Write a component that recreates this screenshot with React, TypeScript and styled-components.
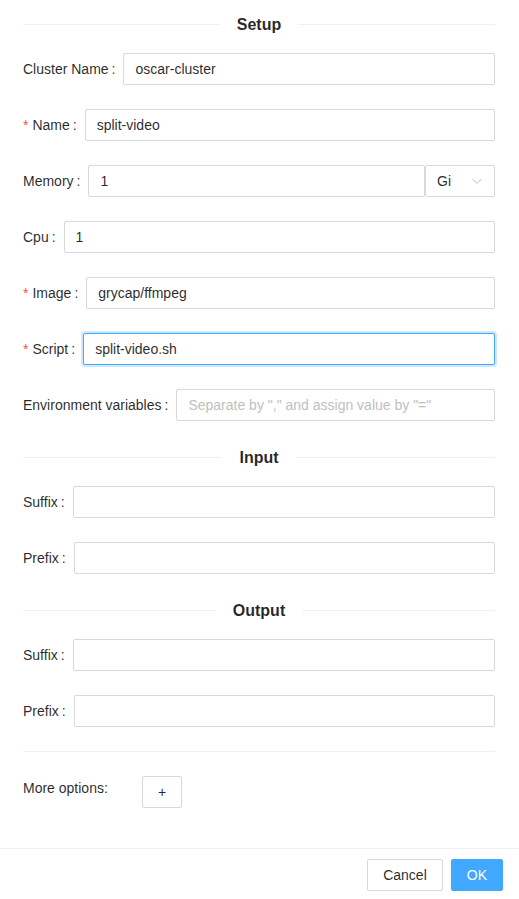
import styled, { createGlobalStyle } from 'styled-components';

const GlobalStyle = createGlobalStyle`
  html, body {
    margin: 0;
    padding: 0;
    background: #ffffff;
  }
  body {
    font-family: "Liberation Sans", Arial, sans-serif;
    font-size: 14px;
    color: rgba(0, 0, 0, 0.85);
  }
`;

const Page = styled.div`
  width: 519px;
  min-height: 899px;
  background: #ffffff;
  box-sizing: border-box;
`;

const Body = styled.div`
  display: block;
  padding: 12px 24px 40px 23px;
`;

const Divider = styled.div`
  display: flex;
  align-items: center;
  height: 25px;
  margin: 16px 0;
  font-size: 16px;
  font-weight: 700;
  line-height: 25px;
  color: rgba(0, 0, 0, 0.85);
  white-space: nowrap;

  &:first-child {
    margin-top: 0;
  }

  &::before,
  &::after {
    content: '';
    flex: 1;
    border-top: 1px solid #f0f0f0;
  }

  span {
    padding: 0 17px;
  }
`;

const PlainDivider = styled.div`
  margin: 24px 0;
  border-top: 1px solid #f0f0f0;
`;

const FormItem = styled.div`
  display: flex;
  align-items: flex-start;
  height: 32px;
  margin-bottom: 24px;
`;

const Label = styled.label<{ $required?: boolean }>`
  display: block;
  height: 32px;
  line-height: 32px;
  white-space: nowrap;
  color: rgba(0, 0, 0, 0.85);

  &::before {
    content: ${({ $required }) => ($required ? "'*'" : 'none')};
    color: #ff4d4f;
    margin-right: 4px;
  }

  &::after {
    content: ':';
    margin: 0 8px 0 3px;
  }
`;

const Control = styled.div`
  flex: 1;
  display: flex;
  min-width: 0;
`;

const Input = styled.input<{ $focused?: boolean }>`
  flex: 1;
  min-width: 0;
  height: 32px;
  box-sizing: border-box;
  padding: 4px 11px;
  border: 1px solid ${({ $focused }) => ($focused ? '#40a9ff' : '#d9d9d9')};
  border-radius: 2px;
  box-shadow: ${({ $focused }) => ($focused ? '0 0 0 2px rgba(24, 144, 255, 0.2)' : 'none')};
  font-family: inherit;
  font-size: 14px;
  color: rgba(0, 0, 0, 0.85);
  background: #ffffff;
  outline: none;

  &::placeholder {
    color: #bfbfbf;
  }
`;

const Select = styled.div`
  width: 70px;
  height: 32px;
  box-sizing: border-box;
  display: flex;
  align-items: center;
  justify-content: space-between;
  padding: 0 11px;
  border: 1px solid #d9d9d9;
  border-radius: 2px;
  color: rgba(0, 0, 0, 0.85);
  background: #ffffff;
`;

const OptionsRow = styled.div`
  display: flex;
  align-items: flex-start;
`;

const OptionsLabel = styled.span`
  width: 119px;
  line-height: 24px;
`;

const Button = styled.button<{ $primary?: boolean }>`
  height: 32px;
  box-sizing: border-box;
  padding: 4px 15px;
  border: 1px solid ${({ $primary }) => ($primary ? '#40a9ff' : '#d9d9d9')};
  border-radius: 2px;
  background: ${({ $primary }) => ($primary ? '#40a9ff' : '#ffffff')};
  color: ${({ $primary }) => ($primary ? '#ffffff' : 'rgba(0, 0, 0, 0.85)')};
  font-family: inherit;
  font-size: 14px;
  cursor: pointer;
`;

const Footer = styled.div`
  display: flex;
  justify-content: flex-end;
  gap: 8px;
  padding: 10px 16px;
  border-top: 1px solid #f0f0f0;
`;

const ChevronDown = () => (
  <svg width="12" height="12" viewBox="0 0 12 12" fill="none">
    <path d="M1.5 4L6 8.5L10.5 4" stroke="#bfbfbf" strokeWidth="1" />
  </svg>
);

type Field = {
  label: string;
  value?: string;
  placeholder?: string;
  required?: boolean;
  focused?: boolean;
};

const setupFields: Field[] = [
  { label: 'Cluster Name', value: 'oscar-cluster' },
  { label: 'Name', value: 'split-video', required: true },
];

const setupFields2: Field[] = [
  { label: 'Cpu', value: '1' },
  { label: 'Image', value: 'grycap/ffmpeg', required: true },
  { label: 'Script', value: 'split-video.sh', required: true, focused: true },
  { label: 'Environment variables', placeholder: 'Separate by "," and assign value by "="' },
];

const ioFields: Field[] = [{ label: 'Suffix' }, { label: 'Prefix' }];

const renderField = (f: Field, key: string) => (
  <FormItem key={key}>
    <Label $required={f.required}>{f.label}</Label>
    <Control>
      <Input
        $focused={f.focused}
        defaultValue={f.value}
        placeholder={f.placeholder}
      />
    </Control>
  </FormItem>
);

const App = () => {
  return (
    <Page>
      <GlobalStyle />
      <Body>
        <Divider><span>Setup</span></Divider>
        {setupFields.map((f) => renderField(f, 'setup-' + f.label))}
        <FormItem>
          <Label>Memory</Label>
          <Control>
            <Input defaultValue="1" />
            <Select>
              <span>Gi</span>
              <ChevronDown />
            </Select>
          </Control>
        </FormItem>
        {setupFields2.map((f) => renderField(f, 'setup2-' + f.label))}

        <Divider><span>Input</span></Divider>
        {ioFields.map((f) => renderField(f, 'in-' + f.label))}

        <Divider><span>Output</span></Divider>
        {ioFields.map((f) => renderField(f, 'out-' + f.label))}

        <PlainDivider />
        <OptionsRow>
          <OptionsLabel>More options:</OptionsLabel>
          <Button>+</Button>
        </OptionsRow>
      </Body>
      <Footer>
        <Button>Cancel</Button>
        <Button $primary>OK</Button>
      </Footer>
    </Page>
  );
};

export default App;
